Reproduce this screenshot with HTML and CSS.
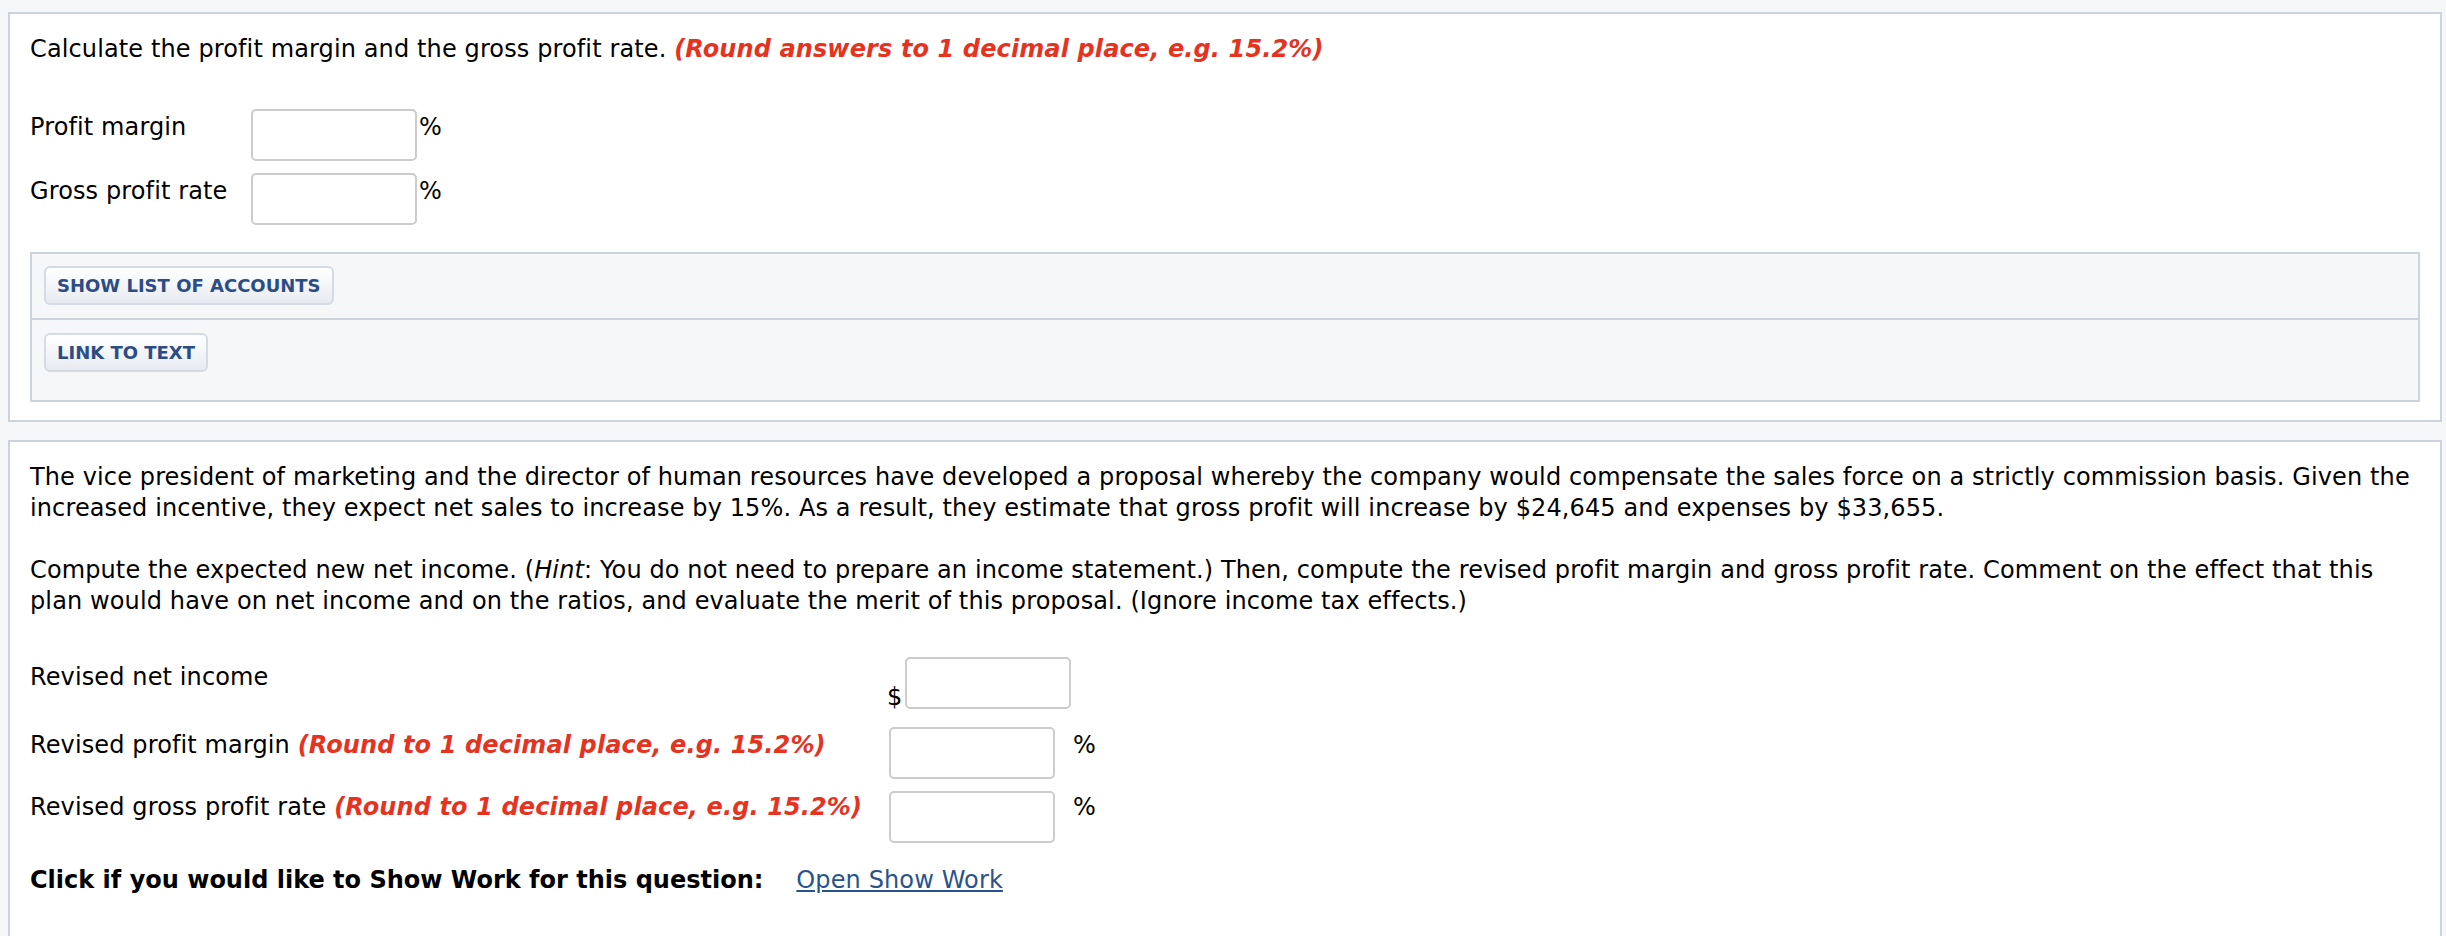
FILE: index.html
```html
<!DOCTYPE html>
<html lang="en">
<head>
<meta charset="utf-8">
<title>Profit margin question</title>
<link rel="stylesheet" href="styles.css">
</head>
<body>
<div class="page">
  <section class="panel panel-first">
    <p class="intro">Calculate the profit margin and the gross profit rate. <em class="hint">(Round answers to 1 decimal place, e.g. 15.2%)</em></p>
    <div class="ratio-grid">
      <div class="ratio-label">Profit margin</div>
      <input class="answer" type="text" aria-label="Profit margin">
      <div class="unit">%</div>
      <div class="ratio-label">Gross profit rate</div>
      <input class="answer" type="text" aria-label="Gross profit rate">
      <div class="unit">%</div>
    </div>
    <div class="tools">
      <div class="tool-row"><button class="tool-btn" type="button">SHOW LIST OF ACCOUNTS</button></div>
      <div class="tool-row tool-row-last"><button class="tool-btn" type="button">LINK TO TEXT</button></div>
    </div>
  </section>

  <section class="panel panel-second">
    <p class="para">The vice president of marketing and the director of human resources have developed a proposal whereby the company would compensate the sales force on a strictly commission basis. Given the increased incentive, they expect net sales to increase by 15%. As a result, they estimate that gross profit will increase by $24,645 and expenses by $33,655.</p>
    <p class="para">Compute the expected new net income. (<i>Hint</i>: You do not need to prepare an income statement.) Then, compute the revised profit margin and gross profit rate. Comment on the effect that this plan would have on net income and on the ratios, and evaluate the merit of this proposal. (Ignore income tax effects.)</p>

    <div class="revised-grid">
      <div class="rev-label rev-label-first">Revised net income</div>
      <div class="money-cell"><span class="currency">$</span><input class="answer" type="text" aria-label="Revised net income"></div>
      <div class="unit-empty"></div>

      <div class="rev-label rev-label-second">Revised profit margin <em class="hint">(Round to 1 decimal place, e.g. 15.2%)</em></div>
      <div class="input-cell input-cell-second"><input class="answer" type="text" aria-label="Revised profit margin"></div>
      <div class="rev-unit rev-label-second">%</div>

      <div class="rev-label rev-label-third">Revised gross profit rate <em class="hint">(Round to 1 decimal place, e.g. 15.2%)</em></div>
      <div class="input-cell"><input class="answer" type="text" aria-label="Revised gross profit rate"></div>
      <div class="rev-unit rev-label-third">%</div>
    </div>

    <p class="show-work"><strong>Click if you would like to Show Work for this question:</strong><a class="work-link" href="#">Open Show Work</a></p>
  </section>
</div>
</body>
</html>
```

FILE: styles.css
```css
html, body {
  margin: 0;
  padding: 0;
}

body {
  background: #f6f7f9;
  font-family: "DejaVu Sans", Verdana, sans-serif;
  font-size: 24px;
  letter-spacing: 0.12px;
  line-height: 31px;
  color: #000;
}

.page {
  padding: 12px 4px 0 8px;
}

.panel {
  background: #fff;
  border: 2px solid #cdd3dd;
  padding: 20px 20px 18px 20px;
}

.panel-second {
  margin-top: 18px;
  padding-bottom: 60px;
}

p {
  margin: 0;
}

.hint {
  color: #e6331f;
  font-weight: bold;
  font-style: italic;
}

/* first panel */
.ratio-grid {
  display: grid;
  grid-template-columns: 221px 166px auto;
  row-gap: 12px;
  align-items: start;
  margin-top: 44px;
}

.ratio-label {
  padding-top: 3px;
}

.answer {
  box-sizing: border-box;
  width: 166px;
  height: 52px;
  border: 2px solid #cccccc;
  border-radius: 5px;
  background: #fff;
  margin: 0;
  padding: 0 8px;
  font: inherit;
}

.unit {
  padding-top: 3px;
  padding-left: 2px;
}

.tools {
  margin-top: 27px;
  border: 2px solid #cdd3dd;
  background: #f6f7f9;
}

.tool-row {
  padding: 12px 12px 13px 12px;
  border-bottom: 2px solid #cdd3dd;
}

.tool-row-last {
  border-bottom: 0;
  padding-top: 13px;
  padding-bottom: 28px;
}

.tool-btn {
  box-sizing: border-box;
  height: 39px;
  padding: 0 11px;
  border: 2px solid #d5dbe4;
  border-radius: 6px;
  background: linear-gradient(#ffffff, #e7ebf1);
  color: #2c4c85;
  font-family: "DejaVu Sans", Verdana, sans-serif;
  font-weight: bold;
  font-size: 18px;
  letter-spacing: 0;
  line-height: 35px;
  cursor: pointer;
}

/* second panel */
.para + .para {
  margin-top: 31px;
}

.revised-grid {
  display: grid;
  grid-template-columns: 857px 184px auto;
  align-items: start;
  margin-top: 40px;
}

.rev-label-first {
  padding-top: 5px;
}

.rev-label-second {
  margin-top: 18px;
  padding-top: 3px;
}

.rev-label-third {
  margin-top: 12px;
  padding-top: 1px;
}

.rev-unit {
  padding-left: 2px;
}

.money-cell {
  display: flex;
  align-items: flex-end;
  gap: 4px;
}

.currency {
  line-height: 24px;
  width: 14px;
}

.input-cell {
  margin-top: 12px;
  padding-left: 2px;
}

.input-cell-second {
  margin-top: 18px;
}

.show-work {
  margin-top: 22px;
}

.show-work strong {
  letter-spacing: 0;
}

.work-link {
  margin-left: 33px;
  color: #28548c;
  text-decoration: underline;
}
```
